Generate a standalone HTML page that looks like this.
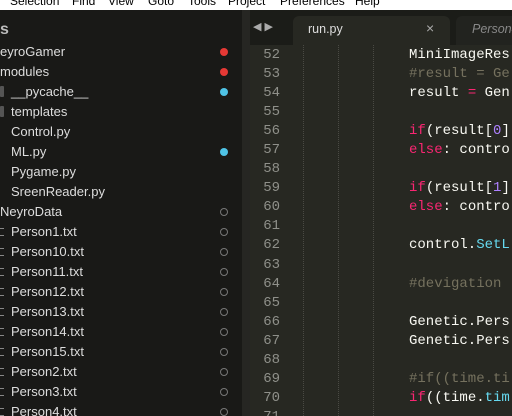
<!DOCTYPE html><html><head><style>
*{margin:0;padding:0;box-sizing:border-box}
html,body{width:512px;height:416px;overflow:hidden}
body{background:#272822;position:relative;font-family:"Liberation Sans",sans-serif}
.menu{position:absolute;left:0;top:0;width:512px;height:10px;background:#fff;overflow:hidden}
.menu span{position:absolute;top:-6px;font-size:12px;color:#000}
.side{position:absolute;left:0;top:10px;width:242px;height:406px;background:#191917;color:#ddd;font-size:13px;overflow:hidden}
.strip{position:absolute;left:242px;top:10px;width:8px;height:406px;background:#262623}
.row{position:absolute;height:20px;line-height:20px;white-space:nowrap}
.dot{position:absolute;left:220px;width:8px;height:8px;border-radius:50%}
.o{border:1.3px solid #777;background:none}
.fi{position:absolute;left:0;width:4px;height:8px;border-top:1px solid #888;border-bottom:1px solid #888}
.fo{position:absolute;left:0;width:4px;height:11px;background:#555;border-radius:1px}
.tabbar{position:absolute;left:250px;top:10px;width:262px;height:35px;background:#1b1c18}
.tab{position:absolute;left:293px;top:16px;width:157px;height:29px;background:#272822;border-radius:6px 6px 0 0}
.gut{position:absolute;left:250px;top:45px;width:30px;font-family:"Liberation Mono",monospace;font-size:14px;color:#8f908a;text-align:right}
.code{position:absolute;left:409px;top:45px;font-family:"Liberation Mono",monospace;font-size:14px;color:#f8f8f2;white-space:pre}
.gut div,.code div{height:19.06px;line-height:19.06px;position:relative;top:1px}
.g{position:absolute;top:45px;height:371px;border-left:1px dotted #4a4a44}
.c{color:#75715e}.k{color:#f92672}.n{color:#ae81ff}.f{color:#66d9ef}
</style></head><body>
<div class="menu"><span style="left:10px">Selection</span><span style="left:72px">Find</span><span style="left:108px">View</span><span style="left:148px">Goto</span><span style="left:188px">Tools</span><span style="left:228px">Project</span><span style="left:280px">Preferences</span><span style="left:355px">Help</span></div>
<div class="side">
<div class="row" style="left:0;top:10px;font-weight:bold;font-size:16px;color:#bbb">s</div>
<div class="row" style="left:0;top:32px">eyroGamer</div><div class="dot" style="background:#e53935;top:38px"></div>
<div class="row" style="left:0;top:52px">modules</div><div class="dot" style="background:#e53935;top:58px"></div>
<div class="fo" style="top:76px"></div><div class="row" style="left:11px;top:72px">__pycache__</div><div class="dot" style="background:#4fc3e6;top:78px"></div>
<div class="fo" style="top:96px"></div><div class="row" style="left:11px;top:92px">templates</div>
<div class="row" style="left:11px;top:112px">Control.py</div>
<div class="row" style="left:11px;top:132px">ML.py</div><div class="dot" style="background:#4fc3e6;top:138px"></div>
<div class="row" style="left:11px;top:152px">Pygame.py</div>
<div class="row" style="left:11px;top:172px">SreenReader.py</div>
<div class="row" style="left:0;top:192px">NeyroData</div><div class="dot o" style="top:198px"></div>
<div class="fi" style="top:218px"></div><div class="row" style="left:11px;top:212px">Person1.txt</div><div class="dot o" style="top:218px"></div>
<div class="fi" style="top:238px"></div><div class="row" style="left:11px;top:232px">Person10.txt</div><div class="dot o" style="top:238px"></div>
<div class="fi" style="top:258px"></div><div class="row" style="left:11px;top:252px">Person11.txt</div><div class="dot o" style="top:258px"></div>
<div class="fi" style="top:278px"></div><div class="row" style="left:11px;top:272px">Person12.txt</div><div class="dot o" style="top:278px"></div>
<div class="fi" style="top:298px"></div><div class="row" style="left:11px;top:292px">Person13.txt</div><div class="dot o" style="top:298px"></div>
<div class="fi" style="top:318px"></div><div class="row" style="left:11px;top:312px">Person14.txt</div><div class="dot o" style="top:318px"></div>
<div class="fi" style="top:338px"></div><div class="row" style="left:11px;top:332px">Person15.txt</div><div class="dot o" style="top:338px"></div>
<div class="fi" style="top:358px"></div><div class="row" style="left:11px;top:352px">Person2.txt</div><div class="dot o" style="top:358px"></div>
<div class="fi" style="top:378px"></div><div class="row" style="left:11px;top:372px">Person3.txt</div><div class="dot o" style="top:378px"></div>
<div class="fi" style="top:398px"></div><div class="row" style="left:11px;top:392px">Person4.txt</div><div class="dot o" style="top:398px"></div>
</div>
<div class="strip"></div>
<div class="tabbar"></div>
<div class="tab"></div>
<div style="position:absolute;left:253px;top:20px;color:#aaa;font-size:11px">◀ ▶</div>
<div style="position:absolute;left:308px;top:22px;color:#ddd;font-size:12.5px">run.py</div>
<div style="position:absolute;left:426px;top:20px;color:#aaa;font-size:14px">×</div>
<div style="position:absolute;left:456px;top:16px;width:60px;height:29px;background:#22231f;border-radius:6px 0 0 0"></div>
<div style="position:absolute;left:472px;top:22px;color:#888;font-size:12.5px;font-style:italic">Person4.</div>
<div class="g" style="left:303px"></div><div class="g" style="left:338px"></div><div class="g" style="left:373px"></div>
<div class="gut"><div>52</div><div>53</div><div>54</div><div>55</div><div>56</div><div>57</div><div>58</div><div>59</div><div>60</div><div>61</div><div>62</div><div>63</div><div>64</div><div>65</div><div>66</div><div>67</div><div>68</div><div>69</div><div>70</div><div>71</div></div>
<div class="code"><div>MiniImageRes</div><div class="c">#result = Ge</div><div>result <span class="k">=</span> Gen</div><div></div><div><span class="k">if</span>(result[<span class="n">0</span>]</div><div><span class="k">else</span>: contro</div><div></div><div><span class="k">if</span>(result[<span class="n">1</span>]</div><div><span class="k">else</span>: contro</div><div></div><div>control.<span class="f">SetL</span></div><div></div><div class="c">#devigation </div><div></div><div>Genetic.Pers</div><div>Genetic.Pers</div><div></div><div class="c">#if((time.ti</div><div><span class="k">if</span>((time.<span class="f">tim</span></div><div></div></div>
</body></html>
